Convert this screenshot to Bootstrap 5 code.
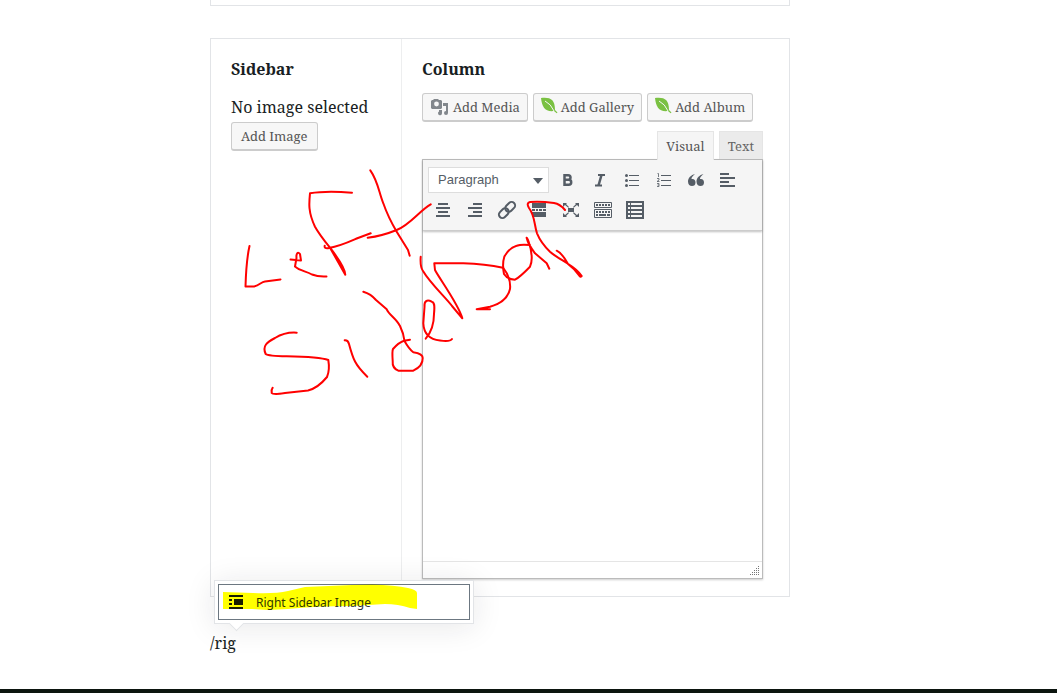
<!DOCTYPE html>
<html lang="en">
<head>
<meta charset="utf-8">
<meta name="viewport" content="width=device-width, initial-scale=1">
<title>Page editor</title>
<link rel="stylesheet" href="https://cdn.jsdelivr.net/npm/bootstrap@5.3.0/dist/css/bootstrap.min.css">
<style>
body { font-family: "Noto Serif", "DejaVu Serif Condensed", "DejaVu Serif", serif; font-size: 16px; line-height: 28px; color: #191e23; background: #fff; overflow-x: hidden; }
.editor-page { padding: 0 267px 0 210px; min-height: 100vh; }
.previous-block { height: 6px; border: 1px solid #e2e4e7; border-top: 0; margin-bottom: 32px; }
.layout-block { border: 1px solid #e2e4e7; min-height: 559px; }
.sidebar-cell { width: 191px; padding: 16px 20px; border-right: 1px solid #edeeef; }
.column-cell { min-width: 0; padding: 16px 26px 17px 20px; }
.cell-title { font-size: 16px; line-height: 28px; font-weight: 700; margin: 0 0 10px; }
.wp-btn { font-size: 13px; line-height: 26px; height: 29px; padding: 0 10px; color: #555; background: #f7f7f7; border: 1px solid #ccc; border-bottom: 2px solid #ccc; border-radius: 3px; white-space: nowrap; display: inline-flex; align-items: center; }
.sidebar-cell .wp-btn { margin-top: 1px; padding: 0 9px; }
.wp-btn.with-icon { padding: 0 7px; gap: 4px; }
.wp-btn svg { flex: none; }
.wp-btn .leaf { margin: -3px -1px 0 0; }
.media-row { gap: 5px; margin-bottom: 9px; }
.mode-tab { font-size: 13px; line-height: 26px; height: 28px; padding: 0 8px; border: 1px solid #e5e5e5; border-bottom: 0; background: #ebebeb; color: #666; }
.mode-tab.active { background: #f5f5f5; color: #555; position: relative; margin-bottom: -1px; height: 29px; margin-right: 5px; }
.rich-editor { border: 1px solid #bbb; box-shadow: 0 1px 2px rgba(0,0,0,.2); }
.tool-bar { position: relative; background: #f5f5f5; padding: 5px 0 5px 5px; height: 71px; border-bottom: 1px solid #ccc; box-shadow: 0 1px 2px rgba(0,0,0,.25); }
.mode-tab.active { z-index: 1; }
.format-select { display: block; width: 121px; height: 26px; margin: 2px 3px 2px 0; border: 1px solid #ddd; border-radius: 0; background: #fff; color: #555d66; font: 13px "Liberation Sans", sans-serif; padding: 0 9px 2px; appearance: none; }
.select-wrap::after { content: ""; position: absolute; right: 9px; top: 13px; border: 5px solid transparent; border-top: 6px solid #555d66; border-bottom: 0; }
.tool-btn { width: 32px; height: 30px; padding: 0; border: 0; background: none; color: #555d66; display: grid; place-items: center; }
.tool-row { width: 100%; }
.tool-row + .tool-row { margin-left: -1px; }
.edit-area { display: block; width: 100%; height: 330px; border: 0; resize: none; outline: 0; }
.status-strip { height: 17px; border-top: 1px solid #e5e5e5; padding: 0 2px 2px 0; }
.slash-line { margin-top: 32px; position: relative; }
.block-menu { position: absolute; left: 4px; bottom: 33px; width: 260px; padding: 3px; background: #fff; border: 1px solid #e2e4e7; box-shadow: 0 3px 30px rgba(25,30,35,.1); }
.block-menu::after { content: ""; position: absolute; left: 16px; bottom: -6px; width: 11px; height: 11px; background: #fff; border: solid #e2e4e7; border-width: 0 1px 1px 0; transform: rotate(45deg); }
.block-option { position: relative; z-index: 1; display: flex; align-items: center; gap: 10px; width: 100%; height: 36px; padding: 1px 7px 0; background: #fff; border: 1px solid #6c7781; color: #32373c; font: 12px "Noto Sans", "Open Sans", sans-serif; }
.marker { position: absolute; left: 0; top: 0; z-index: 2; pointer-events: none; overflow: visible; }
.yellow-ink { mix-blend-mode: multiply; }
.bottom-edge { height: 4px; background: #0c150f; position: fixed; bottom: 0; left: 0; right: 0; }
</style>
</head>
<body>
<main class="editor-page position-relative">
  <div class="previous-block"></div>
  <section class="layout-block d-flex">
    <div class="sidebar-cell flex-shrink-0">
      <h2 class="cell-title">Sidebar</h2>
      <p class="m-0 text-nowrap">No image selected</p>
      <button type="button" class="wp-btn d-flex">Add Image</button>
    </div>
    <div class="column-cell flex-grow-1">
      <h2 class="cell-title">Column</h2>
      <div class="media-row d-flex">
        <button type="button" class="wp-btn with-icon">
          <svg width="19" height="18" viewBox="0 0 19 18"><path fill="#82878c" d="M3 2 4 1h4l1 1h2l1 1v7l-1 1H2l-1-1V3l1-1z"/><circle cx="6.500" cy="6" r="2.400" fill="#f7f7f7"/><path fill="#82878c" d="M13 5h5v10a2 2 0 1 1-2-2V8h-3zM9 12h3v3a2 2 0 1 1-3-1.500z"/></svg>
          Add Media</button>
        <button type="button" class="wp-btn with-icon">
          <svg class="leaf" width="17" height="17" viewBox="0 0 17 17"><path fill="#7ac142" d="M0 1c9-1 14 1 14 12l2.500 2.500-.8.8L13 14C4 15 1 10 0 1z"/><path d="M4 4q6 3 9 10" stroke="#f7f7f7" fill="none"/></svg>
          Add Gallery</button>
        <button type="button" class="wp-btn with-icon">
          <svg class="leaf" width="17" height="17" viewBox="0 0 17 17"><path fill="#7ac142" d="M0 1c9-1 14 1 14 12l2.500 2.500-.8.8L13 14C4 15 1 10 0 1z"/><path d="M4 4q6 3 9 10" stroke="#f7f7f7" fill="none"/></svg>
          Add Album</button>
      </div>
      <div class="d-flex justify-content-end align-items-start">
        <button type="button" class="mode-tab active">Visual</button>
        <button type="button" class="mode-tab">Text</button>
      </div>
      <div class="rich-editor">
        <div class="tool-bar">
          <div class="tool-row d-flex">
          <div class="select-wrap position-relative">
            <select class="format-select" aria-label="Text format"><option>Paragraph</option></select>
          </div>
          <button type="button" class="tool-btn" aria-label="Bold"><svg width="20" height="20" viewBox="0 0 20 20"><path fill="none" stroke="currentColor" stroke-width="2.500" d="M6.500 5.200h3.700a2.200 2.200 0 0 1 0 4.600H6.500zM6.500 9.800h4.200a2.500 2.500 0 0 1 0 5H6.500z"/></svg></button>
          <button type="button" class="tool-btn" aria-label="Italic"><svg width="20" height="20" viewBox="0 0 20 20"><path fill="none" stroke="currentColor" stroke-width="2" d="M8 5h7M5 15.500h7"/><path stroke="currentColor" stroke-width="2.500" d="M11.500 5l-3 10.500"/></svg></button>
          <button type="button" class="tool-btn" aria-label="Bulleted list"><svg width="20" height="20" viewBox="0 0 20 20" fill="currentColor"><path d="M7 5h10v1H7zm0 5h10v1H7zm0 5h10v1H7z"/><circle cx="4.500" cy="5.500" r="1.500"/><circle cx="4.500" cy="10.500" r="1.500"/><circle cx="4.500" cy="15.500" r="1.500"/></svg></button>
          <button type="button" class="tool-btn" aria-label="Numbered list"><svg width="20" height="20" viewBox="0 0 20 20"><path fill="currentColor" d="M7 5h10v1H7zm0 5h10v1H7zm0 5h10v1H7z"/><path fill="none" stroke="currentColor" stroke-width=".8" d="M3.500 3.500h1V7M3 8.500h2v1.500l-2 1.500h2.500M3 13.500h2v3H3M3.500 15H5"/></svg></button>
          <button type="button" class="tool-btn" aria-label="Quote"><svg width="20" height="20" viewBox="0 0 20 20"><path fill="currentColor" d="M9 4C6.500 6 5.500 7.500 5.500 9 8 8.500 9.500 10 9.500 12.500s-1.300 3.500-3.500 3.500S2 14.500 2 11.500C2 8 5 5 9 4zm8.500 0c-2.500 2-3.500 3.500-3.500 5 2.500-.5 4 1 4 3.500S16.700 16 14.500 16s-4-1.500-4-4.500C10.500 8 13.500 5 17.500 4z"/></svg></button>
          <button type="button" class="tool-btn" aria-label="Align left"><svg width="20" height="20" viewBox="0 0 20 20"><path fill="currentColor" d="M2 3h9v2H2zm0 4h15v2H2zm0 4h9v2H2zm0 4h15v2H2z"/></svg></button>
          </div>
          <div class="tool-row d-flex">
          <button type="button" class="tool-btn" aria-label="Align center"><svg width="20" height="20" viewBox="0 0 20 20"><path fill="currentColor" d="M5 3h10v2H5zM3 7h14v2H3zm2 4h10v2H5zm-2 4h14v2H3z"/></svg></button>
          <button type="button" class="tool-btn" aria-label="Align right"><svg width="20" height="20" viewBox="0 0 20 20"><path fill="currentColor" d="M8 3h9v2H8zM3 7h14v2H3zm5 4h9v2H8zm-5 4h14v2H3z"/></svg></button>
          <button type="button" class="tool-btn" aria-label="Insert link"><svg width="20" height="20" viewBox="0 0 20 20"><g fill="none" stroke="currentColor" stroke-width="2" transform="rotate(-45 10 10)"><rect x="0" y="6.500" width="11" height="7" rx="3.500"/><rect x="9" y="6.500" width="11" height="7" rx="3.500"/></g></svg></button>
          <button type="button" class="tool-btn" aria-label="Read more"><svg width="20" height="20" viewBox="0 0 20 20"><path fill="currentColor" d="M3 3h14v5H3zm0 6h3v2H3zm4 0h2v2H7zm3 0h3v2h-3zm4 0h3v2h-3zM3 12h14v5H3z"/></svg></button>
          <button type="button" class="tool-btn" aria-label="Fullscreen"><svg width="20" height="20" viewBox="0 0 20 20"><path fill="currentColor" d="M7 8h6v4H7zM2 3h4L5 4l3 3-.7.7L4 5 2 7zM18 3v4l-2-2-3.300 2.700L12 7l3-3-1-1zM2 17v-4l2 2 3.300-2.700L8 13l-3 3 1 1zM18 17h-4l1-1-3-3 .7-.7L16 15l2-2z"/></svg></button>
          <button type="button" class="tool-btn" aria-label="Toolbar toggle"><svg width="20" height="20" viewBox="0 0 20 20"><path fill="none" stroke="currentColor" d="M1.500 2.500h17v5h-17zM1.500 9.500h17v8h-17z"/><path stroke="currentColor" stroke-width="2" stroke-dasharray="2 1" d="M3 5h14M3 12h14"/><path stroke="currentColor" stroke-width="2" d="M3 15h2M6 15h7M14 15h3"/></svg></button>
          <button type="button" class="tool-btn" aria-label="Table"><svg width="20" height="20" viewBox="0 0 20 20"><path fill="none" stroke="currentColor" stroke-width="2" d="M2 2h16v16H2zM2 6h16M2 10h16M2 14h16"/><path stroke="currentColor" d="M5.500 2v16"/></svg></button>
          </div>
        </div>
        <textarea class="edit-area" aria-label="Column content"></textarea>
        <div class="status-strip d-flex justify-content-end align-items-end">
          <svg width="10" height="10" viewBox="0 0 10 10"><path fill="none" stroke="#777" stroke-dasharray="1 1" d="M8 .500h2M6 2.500h4M4 4.500h6M2 6.500h8M0 8.500h10"/></svg>
        </div>
      </div>
    </div>
  </section>
  <div class="slash-line">
    <div class="block-menu">
      <button type="button" class="block-option">
        <svg width="20" height="20" viewBox="0 0 20 20"><path fill="#191e23" d="M3 2h14v2H3zm0 4h3v2H3zm5 0h9v6H8zM3 10h3v2H3zm0 4h14v2H3z"/></svg>
        Right Sidebar Image</button>
    </div>
    /rig
  </div>
  <!-- Hand-drawn marker strokes over the editor -->
  <svg class="marker yellow-ink" width="1057" height="693" viewBox="0 0 1057 693" aria-hidden="true"><path fill="#ff0" d="M223 592 253 593Q275 594 288 591L305 587 352 585 372 584.500Q395 585 408 588 417 590 417 593V609L410 608Q398 604 385 604L352 606Q315 606 288 609L268 610 252 609H223z"/></svg>
  <svg class="marker" width="1057" height="693" viewBox="0 0 1057 693" fill="none" stroke="#f00" stroke-width="2" stroke-linecap="round" stroke-linejoin="round" aria-hidden="true">
    <path d="M249.500 246C247 257 246 270 245.500 286.500H254C260 285 261 282 265 281.500L280.500 279.500"/>
    <path d="M290.500 259.500 301 260.500 300 254C298 251.500 296 253 296.500 258L295 266.500C300 271 306 271 312 274.500Q318 277 326.500 276.500"/>
    <path d="M352 192.700Q326 190.500 310 193.300C309 203 308 212 315 226.700Q319 234 330 247.700L345.300 274.700Q345 267 330 247.700M324.700 245.700Q324 249 329 248C341 246 351 241 358 238L370.700 233.300"/>
    <path d="M370.300 170.300C378 181 379 193 383.300 203.300Q388 217 396.700 231.700L408 250 409.700 255.700M367.700 237.700Q382 236 396.700 230C411 224 419 211 430.700 204.300"/>
    <path d="M420.700 256.700Q420 267 423 271C430 283 446 298 452 306L462.300 318.300C459 305 439 278 435 270L434.300 263.300H463.300Q485 264 503 267.700C508 274 511 280 510 289Q507 302 490 306.700L476.700 309.300H490"/>
    <path d="M530 245Q521 244 516.700 245.700 509 248 504.300 256.700 502 264 504 274 507 279 515 279.700 520 277 530 266.700 532 262 531.700 256.700C531 244 526 236 526.700 238Q528 244 535 253.300L546.700 263.300 549.300 268.700"/>
    <path d="M565 210Q560 204 554 203 540 201 530 202 526 203 529 208C535 216 534 224 537 233.300Q541 243 550 251.700C556 257 564 261 568.300 264Q578 270 581.700 276C579 279 580 273 568 264Q562 253 556.700 250.700"/>
    <path d="M296.700 332.700C287 332 280 335 275 338 267 342 262 346 265.700 354Q268 356 286.700 356.300 320 357 328.300 360 330 370 327 377 318 388 308 390.500L285 393Q273 395 271.700 393 271 390 272.700 387.700"/>
    <path d="M344.700 340.300Q348 340 349 344C353 359 355 365 367.300 376.700"/>
    <path d="M363.300 291.700Q371 294 376 300L386.700 309.300C389 315 396 318 400 326 403 332 404 337 404.500 341Q409 349 413.300 352.300 423 354 422.700 358 423 366 413.300 370.700H398.300Q392 368 392.700 361 392 351 393 349 398 343 404 340.700L410 339.700"/>
    <path d="M425.700 338.700Q434 329 434 314C435 304 434 302 431.700 301.700 427 299 424 301 424.500 307L423.300 323.300C424 338 435 340 440 340.500Q450 342 452 339"/>
  </svg>
</main>
<div class="bottom-edge"></div>
<script src="https://cdn.jsdelivr.net/npm/bootstrap@5.3.0/dist/js/bootstrap.bundle.min.js"></script>
</body>
</html>
